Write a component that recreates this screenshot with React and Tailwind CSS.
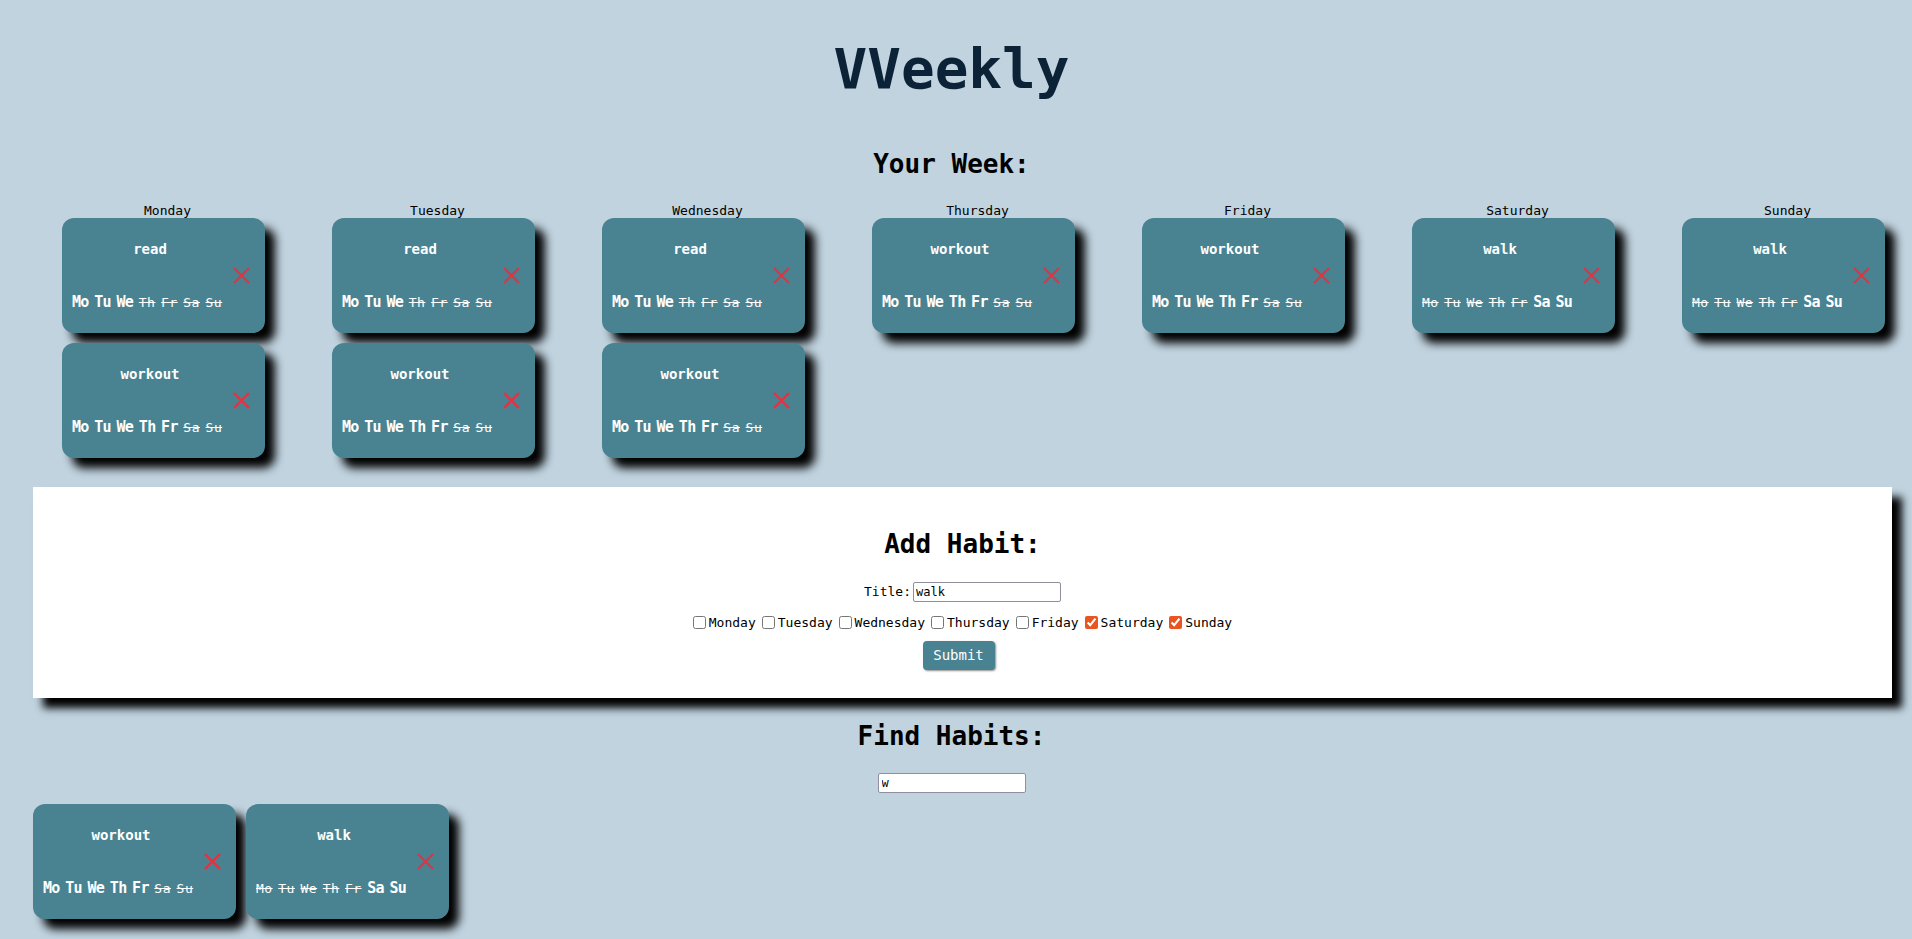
import { useState } from "react";

const DAYS = ["Monday", "Tuesday", "Wednesday", "Thursday", "Friday", "Saturday", "Sunday"];
const SHORT = ["Mo", "Tu", "We", "Th", "Fr", "Sa", "Su"];

const habits = [
  { id: 1, title: "read", days: [0, 1, 2] },
  { id: 2, title: "workout", days: [0, 1, 2, 3, 4] },
  { id: 3, title: "walk", days: [5, 6] },
];

const CloseIcon = () => (
  <svg width="17" height="17" viewBox="0 0 17 17" fill="none">
    <path d="M1 1 L16 16 M16 1 L1 16" stroke="#dc3545" strokeWidth="2.4" />
  </svg>
);

// carte d'une habitude
const HabitCard = ({ habit }) => (
  <div className="w-[203px] h-[115px] shrink-0 rounded-[12px] bg-[#498391] pt-[22px] pl-[10px] shadow-[10px_10px_10px_#000] text-white">
    <div className="w-[156px] text-center text-[14px] font-bold leading-[18px]">{habit.title}</div>
    <div className="flex justify-end pr-[15px] mt-[9px] h-[17px]">
      <CloseIcon />
    </div>
    <div className="flex items-baseline gap-[5.6px] mt-[9px] h-[18px]">
      {SHORT.map((d, i) =>
        habit.days.includes(i) ? (
          <span key={d} className="text-[15px] font-bold tracking-[-0.7px] leading-[18px]">{d}</span>
        ) : (
          <span key={d} className="text-[13px] tracking-[0.5px] line-through leading-[18px]">{d}</span>
        )
      )}
    </div>
  </div>
);

export default function App() {
  const [title, setTitle] = useState("walk");
  const [search, setSearch] = useState("w");
  const [checked, setChecked] = useState([false, false, false, false, false, true, true]);

  const found = habits.filter((h) => search && h.title.includes(search));

  return (
    <div className="min-h-screen w-full bg-[#c0d3df] font-['DejaVu_Sans_Mono',monospace] text-black overflow-hidden">
      <div className="w-[1903px] pb-[20px]">
        <h1 className="mt-[37px] text-center text-[56px] font-bold leading-[64px] text-[#0b2237]">VVeekly</h1>

        <h2 className="mt-[48px] text-center text-[26px] font-bold leading-[30px]">Your Week:</h2>

        {/* grille de la semaine */}
        <div className="flex pl-[62px] gap-[59px] mt-[24px]">
          {DAYS.map((day, i) => (
            <div key={day} className="w-[211px] flex flex-col">
              <div className="text-center text-[13px] leading-[15px]">{day}</div>
              <div className="flex flex-col gap-[10px]">
                {habits
                  .filter((h) => h.days.includes(i))
                  .map((h) => (
                    <HabitCard key={h.id} habit={h} />
                  ))}
              </div>
            </div>
          ))}
        </div>

        {/* formulaire */}
        <div className="ml-[33px] w-[1859px] mt-[29px] bg-white pt-[42px] pb-[28px] shadow-[10px_10px_8px_#000] flex flex-col items-center">
          <h2 className="text-[26px] font-bold leading-[30px]">Add Habit:</h2>
          <div className="flex items-center h-[20px] mt-[23px]">
            <label className="text-[13px] leading-[15px] mt-[-2px]">Title:</label>
            <input
              value={title}
              onChange={(e) => setTitle(e.target.value)}
              className="ml-[2px] w-[148px] h-[20px] border border-[#8f8f9d] rounded-[2px] bg-white px-[2px] text-[12px] text-black outline-none"
            />
          </div>
          <div className="flex items-center h-[16px] mt-[12px] gap-[6px]">
            {DAYS.map((day, i) => (
              <label key={day} className="flex items-center text-[13px] leading-[15px]">
                <input
                  type="checkbox"
                  checked={checked[i]}
                  onChange={() => setChecked(checked.map((c, j) => (j === i ? !c : c)))}
                  className="w-[13px] h-[13px] m-0 mr-[3px] accent-[#e95420]"
                />
                {day}
              </label>
            ))}
          </div>
          <button className="mt-[11px] mr-[8px] w-[72px] h-[29px] rounded-[4px] bg-[#498391] text-white text-[14px] shadow-[1px_1px_2px_rgba(0,0,0,0.45)]">
            Submit
          </button>
        </div>

        <h2 className="mt-[23px] text-center text-[26px] font-bold leading-[30px]">Find Habits:</h2>
        <div className="flex justify-center mt-[22px]">
          <input
            value={search}
            onChange={(e) => setSearch(e.target.value)}
            className="w-[148px] h-[20px] border border-[#8f8f9d] rounded-[2px] bg-white px-[3px] text-[12px] text-black outline-none"
          />
        </div>
        <div className="flex pl-[33px] gap-[10px] mt-[11px]">
          {found.map((h) => (
            <HabitCard key={h.id} habit={h} />
          ))}
        </div>
      </div>
    </div>
  );
}
